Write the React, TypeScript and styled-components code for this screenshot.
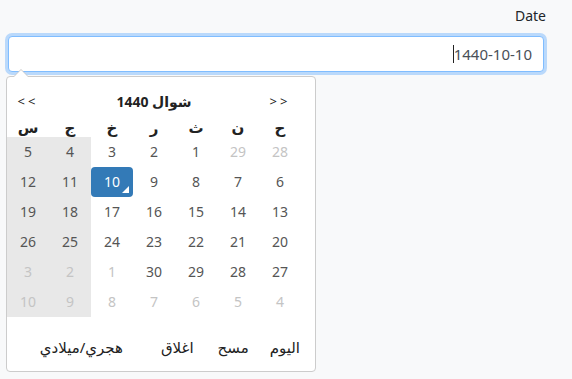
import React from 'react';
import styled, { createGlobalStyle } from 'styled-components';

const GlobalStyle = createGlobalStyle`
  html, body {
    margin: 0;
    padding: 0;
    background: #f8f9fa;
  }
  body {
    font-family: 'Noto Sans', 'DejaVu Sans', sans-serif;
    font-size: 14px;
    color: #333;
    min-height: 379px;
  }
`;

const Page = styled.div`
  width: 536px;
  padding: 6px 0 8px 8px;
`;

const Label = styled.div`
  text-align: right;
  line-height: 20px;
  margin-right: -2px;
  margin-bottom: 10px;
  color: #212529;
`;

const Input = styled.div`
  box-sizing: border-box;
  height: 36px;
  border: 1px solid #80bdff;
  border-radius: 4px;
  background: #fff;
  box-shadow: 0 0 0 3px rgba(0, 123, 255, 0.25);
  display: flex;
  align-items: center;
  justify-content: flex-end;
  padding: 0 11px;
  color: #495057;
  font-size: 15px;
`;

const Caret = styled.span`
  display: inline-block;
  width: 1px;
  height: 18px;
  background: #222;
`;

const Popup = styled.div`
  position: relative;
  box-sizing: border-box;
  width: 310px;
  height: 296px;
  margin: 4px 0 0 -2px;
  background: #fff;
  border: 1px solid #ccc;
  border-radius: 4px;
  padding: 14px 14px 0 0;
  direction: rtl;
  display: flex;
  flex-direction: column;

  &::before,
  &::after {
    content: '';
    position: absolute;
    left: 7px;
    border-left: 7px solid transparent;
    border-right: 7px solid transparent;
  }
  &::before {
    top: -8px;
    border-bottom: 7px solid #ccc;
  }
  &::after {
    top: -7px;
    border-bottom: 7px solid #fff;
  }
`;

const Grid = styled.div`
  display: grid;
  grid-template-columns: repeat(7, 42px);
  width: 294px;
`;

const NavRow = styled(Grid)`
  height: 20px;
  align-items: center;
`;

const Arrow = styled.span`
  direction: ltr;
  unicode-bidi: isolate;
  text-align: center;
  font-size: 13px;
  letter-spacing: 3px;
  color: #222;
`;

const Title = styled.span`
  grid-column: span 5;
  text-align: center;
  font-weight: 700;
  font-size: 14px;
  color: #222;
`;

const WeekHead = styled(Grid)`
  height: 20px;
  align-items: center;
  margin-top: 6px;
`;

const WeekDay = styled.span`
  text-align: center;
  font-weight: 700;
  font-size: 15px;
  color: #222;
`;

const Day = styled.span<{ $muted?: boolean; $weekend?: boolean; $active?: boolean }>`
  position: relative;
  height: 30px;
  line-height: 30px;
  text-align: center;
  font-size: 14px;
  color: ${({ $active, $muted }) => ($active ? '#fff' : $muted ? '#c4c4c4' : '#555')};
  background: ${({ $active, $weekend }) => ($active ? '#337ab7' : $weekend ? '#e8e8e8' : 'transparent')};
  border-radius: ${({ $active }) => ($active ? '4px' : '0')};

  ${({ $active }) =>
    $active &&
    `
    &::after {
      content: '';
      position: absolute;
      right: 4px;
      bottom: 4px;
      border-left: 7px solid transparent;
      border-bottom: 7px solid #fff;
    }
  `}
`;

const Footer = styled.div`
  display: flex;
  align-items: center;
  margin-top: auto;
  height: 52px;
  box-sizing: border-box;
  padding: 4px 1px 0 0;
`;

const FooterButton = styled.span<{ $gap?: number }>`
  font-size: 15px;
  color: #222;
  margin-left: ${({ $gap }) => $gap ?? 0}px;
`;

const weekDays = ['ح', 'ن', 'ث', 'ر', 'خ', 'ج', 'س'];

type Cell = { d: number; muted?: boolean };

const rows: Cell[][] = [
  [{ d: 28, muted: true }, { d: 29, muted: true }, { d: 1 }, { d: 2 }, { d: 3 }, { d: 4 }, { d: 5 }],
  [6, 7, 8, 9, 10, 11, 12].map((d) => ({ d })),
  [13, 14, 15, 16, 17, 18, 19].map((d) => ({ d })),
  [20, 21, 22, 23, 24, 25, 26].map((d) => ({ d })),
  [{ d: 27 }, { d: 28 }, { d: 29 }, { d: 30 }, { d: 1, muted: true }, { d: 2, muted: true }, { d: 3, muted: true }],
  [4, 5, 6, 7, 8, 9, 10].map((d) => ({ d, muted: true })),
];

const App: React.FC = () => {
  return (
    <>
      <GlobalStyle />
      <Page>
        <Label>Date</Label>
        <Input>
          <Caret />
          <span>1440-10-10</span>
        </Input>
        <Popup>
          <NavRow>
            <Arrow>{'>>'}</Arrow>
            <Title>شوال 1440</Title>
            <Arrow>{'<<'}</Arrow>
          </NavRow>
          <WeekHead>
            {weekDays.map((w) => (
              <WeekDay key={w}>{w}</WeekDay>
            ))}
          </WeekHead>
          <Grid>
            {rows.map((row, ri) =>
              row.map((c, ci) => (
                <Day
                  key={`${ri}-${ci}`}
                  $muted={c.muted}
                  $weekend={ci >= 5}
                  $active={ri === 1 && c.d === 10}
                >
                  {c.d}
                </Day>
              ))
            )}
          </Grid>
          <Footer>
            <FooterButton $gap={21}>اليوم</FooterButton>
            <FooterButton $gap={24}>مسح</FooterButton>
            <FooterButton $gap={38}>اغلاق</FooterButton>
            <FooterButton>هجري/ميلادي</FooterButton>
          </Footer>
        </Popup>
      </Page>
    </>
  );
};

export default App;
